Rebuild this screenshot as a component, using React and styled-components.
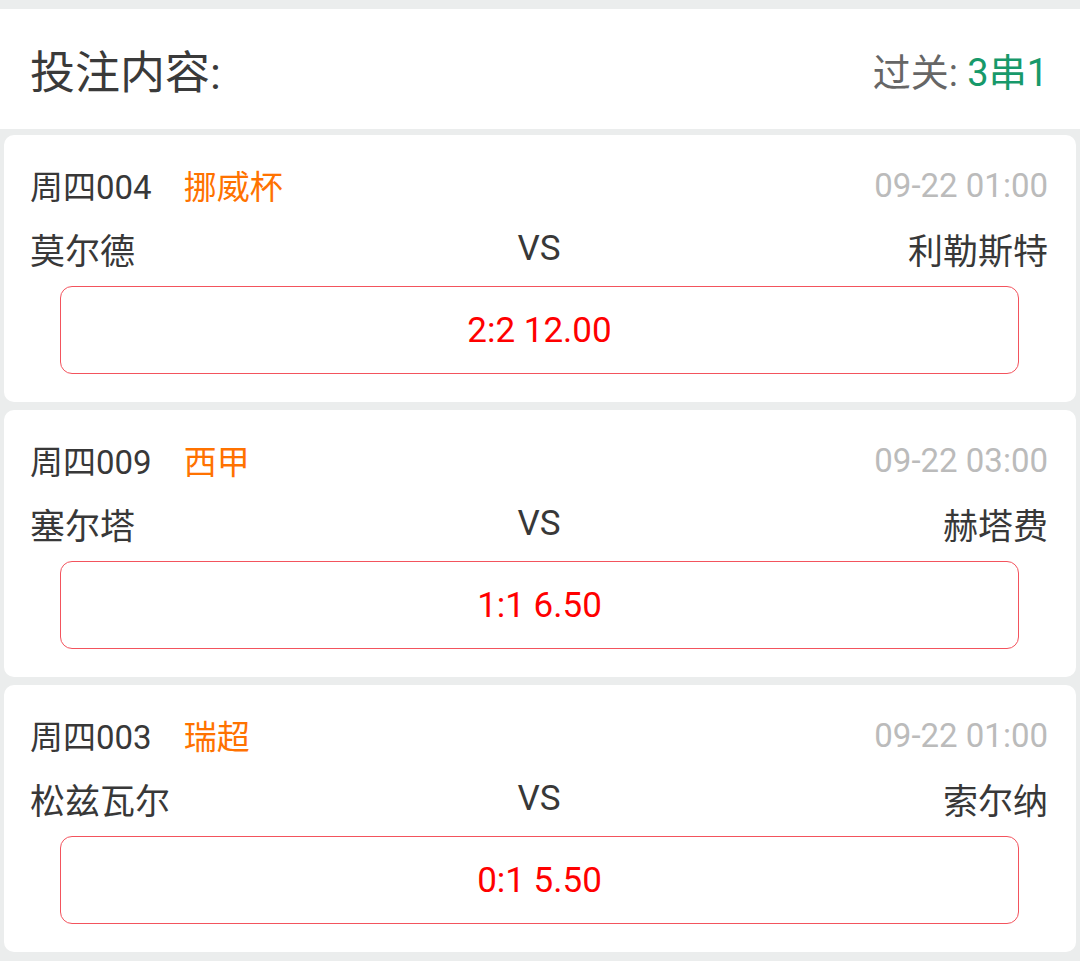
import React from "react";
import styled, { createGlobalStyle } from "styled-components";

const GlobalStyle = createGlobalStyle`
  body {
    margin: 0;
    background: #ebeded;
    font-family: Roboto, "Noto Sans CJK SC", sans-serif;
  }
`;

const Page = styled.div`
  width: 1080px;
  min-height: 961px;
  padding-top: 9px;
  box-sizing: border-box;
  background: #ebeded;
`;

const Header = styled.div`
  height: 120px;
  background: #fff;
  display: flex;
  align-items: center;
  justify-content: space-between;
  padding: 0 32px 0 30px;
  margin-bottom: 6px;
`;

const Title = styled.div`
  font-size: 45px;
  color: #3a3a3a;
`;

const Pass = styled.div`
  font-size: 38px;
  color: #666;
  span {
    color: #17996a;
  }
`;

const List = styled.div`
  display: flex;
  flex-direction: column;
  gap: 8px;
  padding: 0 4px;
`;

const Card = styled.div`
  background: #fff;
  border-radius: 10px;
  padding: 30px 28px 28px 26px;
`;

const Row = styled.div`
  display: flex;
  align-items: center;
  height: 40px;
  margin-bottom: 18px;
`;

const Code = styled.span`
  font-size: 33px;
  color: #383838;
`;

const League = styled.span`
  font-size: 33px;
  color: #ff7200;
  margin-left: 32px;
`;

const Time = styled.span`
  font-size: 33px;
  color: #bbb;
  margin-left: auto;
`;

const Teams = styled.div`
  display: grid;
  grid-template-columns: 1fr auto 1fr;
  align-items: center;
  height: 40px;
  font-size: 35px;
  color: #383838;
  margin-bottom: 23px;
`;

const Home = styled.span``;
const Vs = styled.span`
  text-align: center;
`;
const Away = styled.span`
  text-align: right;
`;

const Pick = styled.div`
  margin: 0 29px 0 30px;
  height: 88px;
  box-sizing: border-box;
  border: 1.5px solid #f3535d;
  border-radius: 12px;
  display: flex;
  align-items: center;
  justify-content: center;
  font-size: 35px;
  color: #f00;
`;

const matches = [
  { code: "周四004", league: "挪威杯", time: "09-22 01:00", home: "莫尔德", away: "利勒斯特", pick: "2:2 12.00" },
  { code: "周四009", league: "西甲", time: "09-22 03:00", home: "塞尔塔", away: "赫塔费", pick: "1:1 6.50" },
  { code: "周四003", league: "瑞超", time: "09-22 01:00", home: "松兹瓦尔", away: "索尔纳", pick: "0:1 5.50" },
];

export default function App() {
  return (
    <Page>
      <GlobalStyle />
      <Header>
        <Title>投注内容:</Title>
        <Pass>
          过关: <span>3串1</span>
        </Pass>
      </Header>
      <List>
        {matches.map((m) => (
          <Card key={m.code}>
            <Row>
              <Code>{m.code}</Code>
              <League>{m.league}</League>
              <Time>{m.time}</Time>
            </Row>
            <Teams>
              <Home>{m.home}</Home>
              <Vs>VS</Vs>
              <Away>{m.away}</Away>
            </Teams>
            <Pick>{m.pick}</Pick>
          </Card>
        ))}
      </List>
    </Page>
  );
}
